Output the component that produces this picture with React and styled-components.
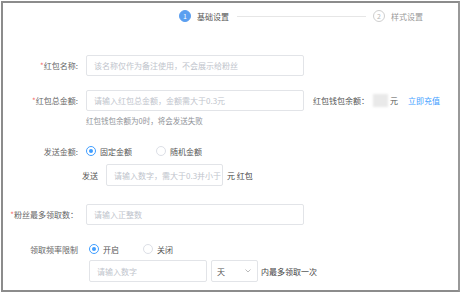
import React from "react";
import styled, { createGlobalStyle } from "styled-components";

const Global = createGlobalStyle`
  html, body { margin: 0; padding: 0; background: #fff; }
  body { font-family: "Noto Sans CJK SC", "Noto Sans", sans-serif; }
  * { box-sizing: border-box; }
`;

const Frame = styled.div`
  margin: 1px 0 0 1px;
  width: 459px;
  height: 291px;
  border: 2px solid #8c8c8c;
  border-right-color: #999;
  display: flex;
  flex-direction: column;
  overflow: hidden;
  font-size: 8px;
  color: #666;
`;

const Steps = styled.div`
  display: flex;
  align-items: center;
  padding: 7px 0 0 176px;
  height: 19px;
`;

const StepDot = styled.span`
  width: 12px;
  height: 12px;
  border-radius: 50%;
  display: flex;
  align-items: center;
  justify-content: center;
  font-size: 7px;
  line-height: 1;
  background: ${(p) => (p.$active ? "#5b9ff0" : "#fff")};
  color: ${(p) => (p.$active ? "#fff" : "#b8b8b8")};
  border: 1px solid ${(p) => (p.$active ? "#5b9ff0" : "#cfcfcf")};
  flex: none;
`;

const StepText = styled.span`
  margin-left: 6px;
  font-size: 8px;
  color: ${(p) => (p.$active ? "#555" : "#999")};
  white-space: nowrap;
`;

const StepLine = styled.span`
  width: 129px;
  height: 1px;
  background: #e6e6e6;
  margin: 0 7px 0 8px;
`;

const Form = styled.div`
  display: flex;
  flex-direction: column;
  padding-top: 33px;
`;

const Row = styled.div`
  display: flex;
  align-items: center;
  height: ${(p) => p.$h || 21}px;
  margin-top: ${(p) => p.$mt || 0}px;
  padding-left: ${(p) => p.$pl || 0}px;
`;

const Label = styled.div`
  width: 75px;
  text-align: right;
  margin-right: ${(p) => p.$gap || 8}px;
  white-space: nowrap;
  color: #666;
  flex: none;
`;

const Star = styled.span`
  color: #f56c6c;
`;

const Input = styled.div`
  width: ${(p) => p.$w}px;
  height: ${(p) => p.$h || 21}px;
  border: 1px solid #e2e4e8;
  border-radius: 2px;
  display: flex;
  align-items: center;
  padding-left: 7px;
  color: #c0c4cc;
  white-space: nowrap;
  overflow: hidden;
  flex: none;
`;

const Balance = styled.div`
  display: flex;
  align-items: center;
  margin-left: 9px;
  white-space: nowrap;
  color: #555;
`;

const Blur = styled.span`
  width: 15px;
  height: 13px;
  background: #e9e9e9;
  filter: blur(1px);
  margin: 0 2px 0 4px;
`;

const Link = styled.span`
  color: #409eff;
  margin-left: 10px;
`;

const Help = styled.div`
  margin: 5px 0 0 83px;
  font-size: 7.5px;
  color: #909399;
  height: 10px;
  line-height: 10px;
  white-space: nowrap;
`;

const RadioGroup = styled.div`
  display: flex;
  align-items: center;
`;

const RadioItem = styled.label`
  display: flex;
  align-items: center;
  margin-right: ${(p) => p.$mr || 0}px;
  color: #555;
  white-space: nowrap;
`;

const RadioDot = styled.span`
  width: 10px;
  height: 10px;
  border-radius: 50%;
  border: 1px solid ${(p) => (p.$on ? "#409eff" : "#dcdfe6")};
  display: flex;
  align-items: center;
  justify-content: center;
  margin-right: 4px;
  &::after {
    content: "";
    width: 4px;
    height: 4px;
    border-radius: 50%;
    background: ${(p) => (p.$on ? "#409eff" : "transparent")};
  }
`;

const Text = styled.span`
  margin: ${(p) => p.$m || "0"};
  color: ${(p) => p.$c || "#555"};
  white-space: nowrap;
`;

const Select = styled.div`
  width: 47px;
  height: 22px;
  border: 1px solid #e2e4e8;
  border-radius: 2px;
  margin-left: 4px;
  display: flex;
  align-items: center;
  justify-content: space-between;
  padding: 0 6px 0 5px;
  color: #555;
  flex: none;
`;

function Radio({ on, children, mr }) {
  return (
    <RadioItem $mr={mr}>
      <RadioDot $on={on} />
      {children}
    </RadioItem>
  );
}

export default function App() {
  return (
    <>
      <Global />
      <Frame>
        <Steps>
          <StepDot $active>1</StepDot>
          <StepText $active>基础设置</StepText>
          <StepLine />
          <StepDot>2</StepDot>
          <StepText>样式设置</StepText>
        </Steps>
        <Form>
          <Row>
            <Label>
              <Star>*</Star>红包名称:
            </Label>
            <Input $w={218}>该名称仅作为备注使用，不会展示给粉丝</Input>
          </Row>
          <Row $mt={14}>
            <Label>
              <Star>*</Star>红包总金额:
            </Label>
            <Input $w={218}>请输入红包总金额，金额需大于0.3元</Input>
            <Balance>
              红包钱包余额：<Blur />元<Link>立即充值</Link>
            </Balance>
          </Row>
          <Help>红包钱包余额为0时，将会发送失败</Help>
          <Row $mt={17} $h={16}>
            <Label>发送金额:</Label>
            <RadioGroup>
              <Radio on mr={24}>固定金额</Radio>
              <Radio>随机金额</Radio>
            </RadioGroup>
          </Row>
          <Row $mt={5} $h={22} $pl={79}>
            <Text $m="0 8px 0 0">发送</Text>
            <Input $w={117} $h={22}>请输入数字，需大于0.3并小于</Input>
            <Text $m="0 0 0 4px" $c="#444">元 红包</Text>
          </Row>
          <Row $mt={18} $h={21}>
            <Label>
              <Star>*</Star>粉丝最多领取数：
            </Label>
            <Input $w={218}>请输入正整数</Input>
          </Row>
          <Row $mt={16} $h={16}>
            <Label $gap={11}>领取频率限制</Label>
            <RadioGroup>
              <Radio on mr={24}>开启</Radio>
              <Radio>关闭</Radio>
            </RadioGroup>
          </Row>
          <Row $mt={3} $h={22} $pl={86}>
            <Input $w={118} $h={22}>请输入数字</Input>
            <Select>
              天
              <svg width="6" height="4" viewBox="0 0 6 4">
                <path d="M0.5 0.5 L3 3 L5.5 0.5" fill="none" stroke="#aaa" strokeWidth="0.8" />
              </svg>
            </Select>
            <Text $m="0 0 0 3px" $c="#444">内最多领取一次</Text>
          </Row>
        </Form>
      </Frame>
    </>
  );
}
